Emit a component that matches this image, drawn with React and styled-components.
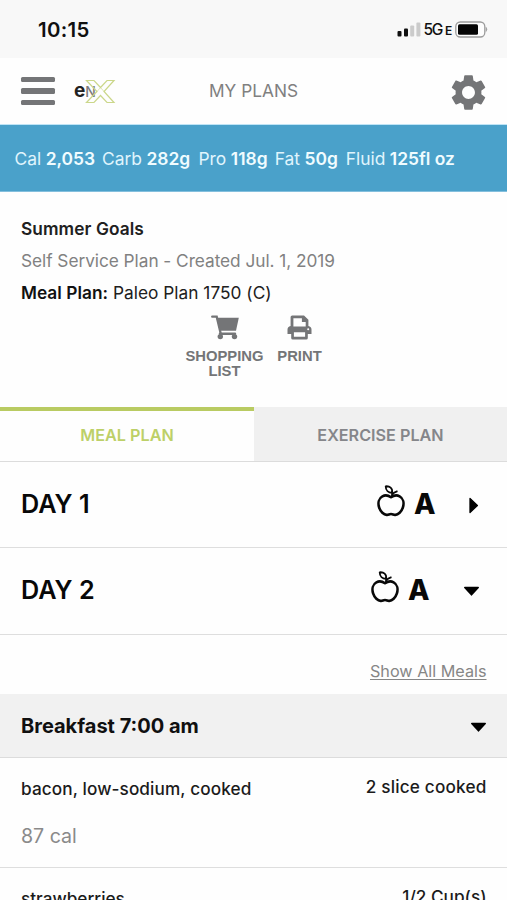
import React from "react";
import styled, { createGlobalStyle } from "styled-components";
import { MdSettings } from "react-icons/md";

const GlobalStyle = createGlobalStyle`
  * { box-sizing: border-box; }
  body { margin: 0; background: #fefefe; overflow: hidden; }
`;

const Screen = styled.div`
  width: 507px;
  height: 900px;
  overflow: hidden;
  display: flex;
  flex-direction: column;
  background: #fefefe;
  color: #101010;
  font-family: Inter, "Liberation Sans", sans-serif;
  > * { flex-shrink: 0; }
`;

/* Phone status bar */
const StatusBar = styled.div`
  height: 58px;
  padding: 0 19px 0 38px;
  display: flex;
  align-items: center;
  justify-content: space-between;
  background: #f8f8f8;
`;
const Clock = styled.span`
  font-size: 20.4px;
  font-weight: 600;
  letter-spacing: 0.3px;
  line-height: 24px;
  margin-top: 1px;
`;
const Signals = styled.div`
  display: flex;
  align-items: center;
`;
const Network = styled.span`
  display: flex;
  align-items: baseline;
  gap: 3px;
  margin: 2px 2.8px 0 3px;
  font-size: 15.5px;
  line-height: 18px;
  font-weight: 500;
  letter-spacing: -1.4px;
`;
const NetworkSuffix = styled.span`
  font-size: 12px;
  font-weight: 600;
  letter-spacing: 0;
`;

/* App header */
const Header = styled.header`
  height: 67px;
  padding: 0 17px 0 21px;
  display: grid;
  grid-template-columns: 53px 1fr 43px;
  align-items: center;
  border-bottom: 1px solid #bfe4f6;
`;
const Menu = styled.button`
  width: 34px;
  padding: 0;
  border: 0;
  background: none;
  display: grid;
  gap: 6px;
`;
const MenuBar = styled.i`
  height: 5.6px;
  border-radius: 1.5px;
  background: #747577;
`;
const Brand = styled.div`
  display: grid;
  grid-template-columns: 135px 1fr;
  align-items: center;
`;
const Title = styled.h1`
  margin: 0;
  font-size: 17.3px;
  font-weight: 400;
  line-height: 22px;
  color: #808080;
`;
const Settings = styled(MdSettings)`
  display: block;
  margin: 2px 0 0 -0.5px;
  width: 43px;
  height: 43px;
  color: #747577;
`;

/* Daily totals */
const Totals = styled.div`
  height: 67px;
  padding: 0 14.5px;
  display: flex;
  align-items: center;
  gap: 7px;
  background: #4aa1ca;
  border-bottom: 1px solid #83bfdd;
  color: #e0f5fd;
  font-size: 17.4px;
  white-space: nowrap;
`;
const Total = styled.span`
  display: flex;
  gap: 4.5px;
  width: ${(p) => p.$width}px;
`;
const Value = styled.b`
  font-weight: 600;
  color: #f0fcff;
`;

/* Plan summary */
const Summary = styled.section`
  height: 215px;
  padding: 20.6px 21px 0;
  font-size: 17.3px;
  line-height: 32.2px;
`;
const SummaryLine = styled.div`
  color: ${(p) => (p.$muted ? "#818181" : "#202020")};
  font-weight: ${(p) => (p.$strong ? 600 : 400)};
  letter-spacing: ${(p) => (p.$strong ? "0.08px" : p.$muted ? "-0.05px" : "0.02px")};
  white-space: nowrap;
  b { font-weight: 600; color: #111; }
`;
const Actions = styled.div`
  display: flex;
  padding: 6px 0 0 155px;
`;
const Action = styled.button`
  width: ${(p) => p.$width}px;
  padding: 0;
  border: 0;
  background: none;
  display: flex;
  flex-direction: column;
  align-items: center;
  gap: 9px;
  color: #747577;
  font: 700 14.8px/15px "Liberation Sans", Arial, sans-serif;
`;

/* Tabs */
const Tabs = styled.nav`
  height: 55px;
  display: grid;
  grid-template-columns: 254px 253px;
  border-bottom: 1px solid #dcdcdc;
`;
const Tab = styled.button`
  padding: ${(p) => (p.$active ? "0 0 2px" : "2px 0 0")};
  border: 0;
  border-top: ${(p) => (p.$active ? "4px solid #b9cb62" : "0")};
  background: ${(p) => (p.$active ? "#fefefe" : "#f0f0f0")};
  color: ${(p) => (p.$active ? "#bdd068" : "#85868a")};
  font: 600 16.2px/20px Inter, sans-serif;
`;

/* Days */
const DayRow = styled.div`
  height: ${(p) => p.$height}px;
  padding: 0 ${(p) => (p.$open ? 27 : 28)}px ${(p) => (p.$open ? 3 : 1)}px 21px;
  display: flex;
  align-items: center;
  border-bottom: 1px solid #dedede;
  color: #080808;
`;
const DayName = styled.h2`
  margin: 0;
  flex: 1;
  font-size: 25.2px;
  font-weight: 600;
  line-height: 30px;
`;
const Grade = styled.span`
  margin: 0 ${(p) => (p.$open ? 33.5 : 32.5)}px 0 9px;
  font: 800 28px/32px Inter, sans-serif;
`;

/* Meals */
const ShowAll = styled.div`
  height: 59px;
  padding: 24px 20.5px 0 0;
  text-align: right;
`;
const ShowAllLink = styled.a`
  font-size: 16.2px;
  line-height: 24px;
  color: #868686;
  text-decoration: underline;
  text-decoration-thickness: 1px;
  text-underline-offset: 2px;
`;
const MealHeader = styled.div`
  height: 64px;
  padding: 0 20.5px 0 21px;
  display: flex;
  align-items: center;
  justify-content: space-between;
  background: #f1f1f1;
  border-bottom: 1px solid #dcdcdc;
  font-size: 20px;
  font-weight: 700;
`;
const Food = styled.div`
  height: 110px;
  padding: 18px 20.5px 0 21px;
  border-bottom: 1px solid #dedede;
`;
const FoodLine = styled.div`
  display: flex;
  justify-content: space-between;
  font-size: 17.2px;
  line-height: 25px;
  font-weight: 500;
  color: #1b1b1b;
`;
const FoodName = styled.span`
  letter-spacing: ${(p) => p.$track || 0}px;
`;
const Amount = styled.span`
  margin-top: -2px;
  letter-spacing: ${(p) => p.$track || 0}px;
`;
const Calories = styled.div`
  margin-top: 22px;
  font-size: 19.6px;
  line-height: 26px;
  color: #8a8a8a;
`;

const SignalBars = () => (
  <svg width="24" height="15" viewBox="0 0 24 15">
    <rect x="0.5" y="9" width="4" height="5.5" rx="1" fill="#111" />
    <rect x="7" y="6.5" width="4" height="8" rx="1" fill="#111" />
    <rect x="13.2" y="3.5" width="4" height="11" rx="1" fill="#cbcbcb" />
    <rect x="19.4" y="0.5" width="4" height="14" rx="1" fill="#cbcbcb" />
  </svg>
);

const Battery = () => (
  <svg width="33" height="17" viewBox="0 0 33 17">
    <rect x="0.8" y="1" width="29" height="15" rx="4.5" fill="#fdfdfd" stroke="#9c9c9c" strokeWidth="1.3" />
    <rect x="3" y="3.3" width="20" height="10.5" rx="1.5" fill="#050505" />
    <path d="M31 6.3Q33 8.3 31 10.5Z" fill="#9c9c9c" stroke="#9c9c9c" strokeWidth=".5" />
  </svg>
);

const LogoMark = styled.div`
  display: flex;
  align-items: center;
  height: 26px;
`;
const LogoText = styled.span`
  font: 700 19px/24px Inter, sans-serif;
  color: #222;
  white-space: nowrap;
`;
const LogoN = styled.span`
  font-size: 14px;
  font-weight: 500;
  color: #7c7c7c;
`;
const LogoX = styled.svg`
  margin-left: -11px;
`;

const Logo = () => (
  <LogoMark>
    <LogoText>e<LogoN>N</LogoN></LogoText>
    <LogoX width="31" height="25" viewBox="0 0 31 25" fill="none" stroke="#cbd78a" strokeWidth="1.2">
      <path d="M1.5 1.5H9L15.5 8.5L22 1.5H29L19 12.5L29 23.5H22L15.5 16.5L9 23.5H1.5L12 12.5Z" />
      <path d="M12 12.5L15.5 8.5L19 12.5" strokeWidth=".6" />
    </LogoX>
  </LogoMark>
);

const Cart = () => (
  <svg width="28" height="25" viewBox="0 0 28 25" fill="none" stroke="currentColor">
    <path d="M1.2 1.7H5.7L9.7 18.5" strokeWidth="2.3" strokeLinecap="round" />
    <path d="M5.3 2.8H27.8L25 15.7H9Z" fill="currentColor" stroke="none" />
    <path d="M9 18.8H24" strokeWidth="2.4" strokeLinecap="round" />
    <circle cx="9.3" cy="21.6" r="2.7" fill="currentColor" stroke="none" />
    <circle cx="23.5" cy="21.6" r="2.7" fill="currentColor" stroke="none" />
  </svg>
);

const Printer = () => (
  <svg width="25" height="25" viewBox="0 0 25 25" fill="currentColor">
    <path fillRule="evenodd" d="M5.2 0.5H17L21.4 4.8V11Q24.5 11.5 24.5 14.5V19H20.8V23Q20.8 24.6 19.2 24.6H5.8Q4.2 24.6 4.2 23V19H.5V14.5Q.5 11.5 3.6 11V2Q3.6.5 5.2.5ZM6.4 3.2V11.4H18.7V6.9H14.9V3.2ZM6.9 17.3V21.8H18.1V17.3ZM21.2 13.2A1 1 0 1 0 21.2 15.2A1 1 0 1 0 21.2 13.2Z" />
  </svg>
);

const AppleIcon = styled.svg`
  display: block;
  margin-top: -6px;
`;
const Apple = () => (
  <AppleIcon width="28" height="32" viewBox="0 0 28 32" fill="none" stroke="#080808" strokeLinejoin="round">
    <path strokeWidth="2.6" d="M14 12.2C11.8 10.7 8.3 9.8 5.4 11.3C1.6 13.3.8 18.2 2.1 22.4C3.4 26.5 6.9 30.2 10 29.9C11.8 29.7 12.3 29 14 29C15.7 29 16.2 29.7 18 29.9C21.1 30.2 24.6 26.5 25.9 22.4C27.2 18.2 26.4 13.3 22.6 11.3C19.7 9.8 16.2 10.7 14 12.2Z" />
    <path strokeWidth="1.8" d="M8.7 1.3C12.5.9 16 3 15 7.8C11.5 7.8 8.7 5.5 8.7 1.3ZM15 7.8V11.5M14.8 10C16 8 18 7 20.5 6.2" />
  </AppleIcon>
);

const CaretIcon = styled.svg`
  display: block;
  margin-top: 3px;
`;
const Caret = ({ open }) =>
  open ? (
    <CaretIcon width="17" height="11" viewBox="0 0 17 11">
      <path d="M1.8 1.5H15.2L8.5 8.8Z" fill="#000" stroke="#000" strokeWidth="1.6" strokeLinejoin="round" />
    </CaretIcon>
  ) : (
    <CaretIcon width="11" height="17" viewBox="0 0 11 17">
      <path d="M2 1.5V15.5L9.4 8.5Z" fill="#000" stroke="#000" strokeWidth="1.3" strokeLinejoin="round" />
    </CaretIcon>
  );

const totals = [
  ["Cal", "2,053", 80.5],
  ["Carb", "282g", 89.5],
  ["Pro", "118g", 69.2],
  ["Fat", "50g", 64],
  ["Fluid", "125fl oz", 112],
];

export default function App() {
  return (
    <>
      <GlobalStyle />
      <Screen>
        <StatusBar>
          <Clock>10:15</Clock>
          <Signals>
            <SignalBars />
            <Network>5G<NetworkSuffix>E</NetworkSuffix></Network>
            <Battery />
          </Signals>
        </StatusBar>
        <Header>
          <Menu aria-label="Menu"><MenuBar /><MenuBar /><MenuBar /></Menu>
          <Brand>
            <Logo />
            <Title>MY PLANS</Title>
          </Brand>
          <Settings />
        </Header>
        <Totals>
          {totals.map(([label, value, width]) => (
            <Total key={label} $width={width}>{label}<Value>{value}</Value></Total>
          ))}
        </Totals>
        <Summary>
          <SummaryLine $strong>Summer Goals</SummaryLine>
          <SummaryLine $muted>Self Service Plan - Created Jul. 1, 2019</SummaryLine>
          <SummaryLine><b>Meal Plan:</b> Paleo Plan 1750 (C)</SummaryLine>
          <Actions>
            <Action $width={97}><Cart />SHOPPING LIST</Action>
            <Action $width={53}><Printer />PRINT</Action>
          </Actions>
        </Summary>
        <Tabs>
          <Tab $active>MEAL PLAN</Tab>
          <Tab>EXERCISE PLAN</Tab>
        </Tabs>
        <DayRow $height={86}>
          <DayName>DAY 1</DayName><Apple /><Grade>A</Grade><Caret />
        </DayRow>
        <DayRow $height={87} $open>
          <DayName>DAY 2</DayName><Apple /><Grade $open>A</Grade><Caret open />
        </DayRow>
        <ShowAll><ShowAllLink>Show All Meals</ShowAllLink></ShowAll>
        <MealHeader>Breakfast 7:00 am<Caret open /></MealHeader>
        <Food>
          <FoodLine>
            <FoodName $track={0.1}>bacon, low-sodium, cooked</FoodName>
            <Amount $track={0.18}>2 slice cooked</Amount>
          </FoodLine>
          <Calories>87 cal</Calories>
        </Food>
        <Food>
          <FoodLine>
            <FoodName>strawberries</FoodName>
            <Amount>1/2 Cup(s)</Amount>
          </FoodLine>
        </Food>
      </Screen>
    </>
  );
}
